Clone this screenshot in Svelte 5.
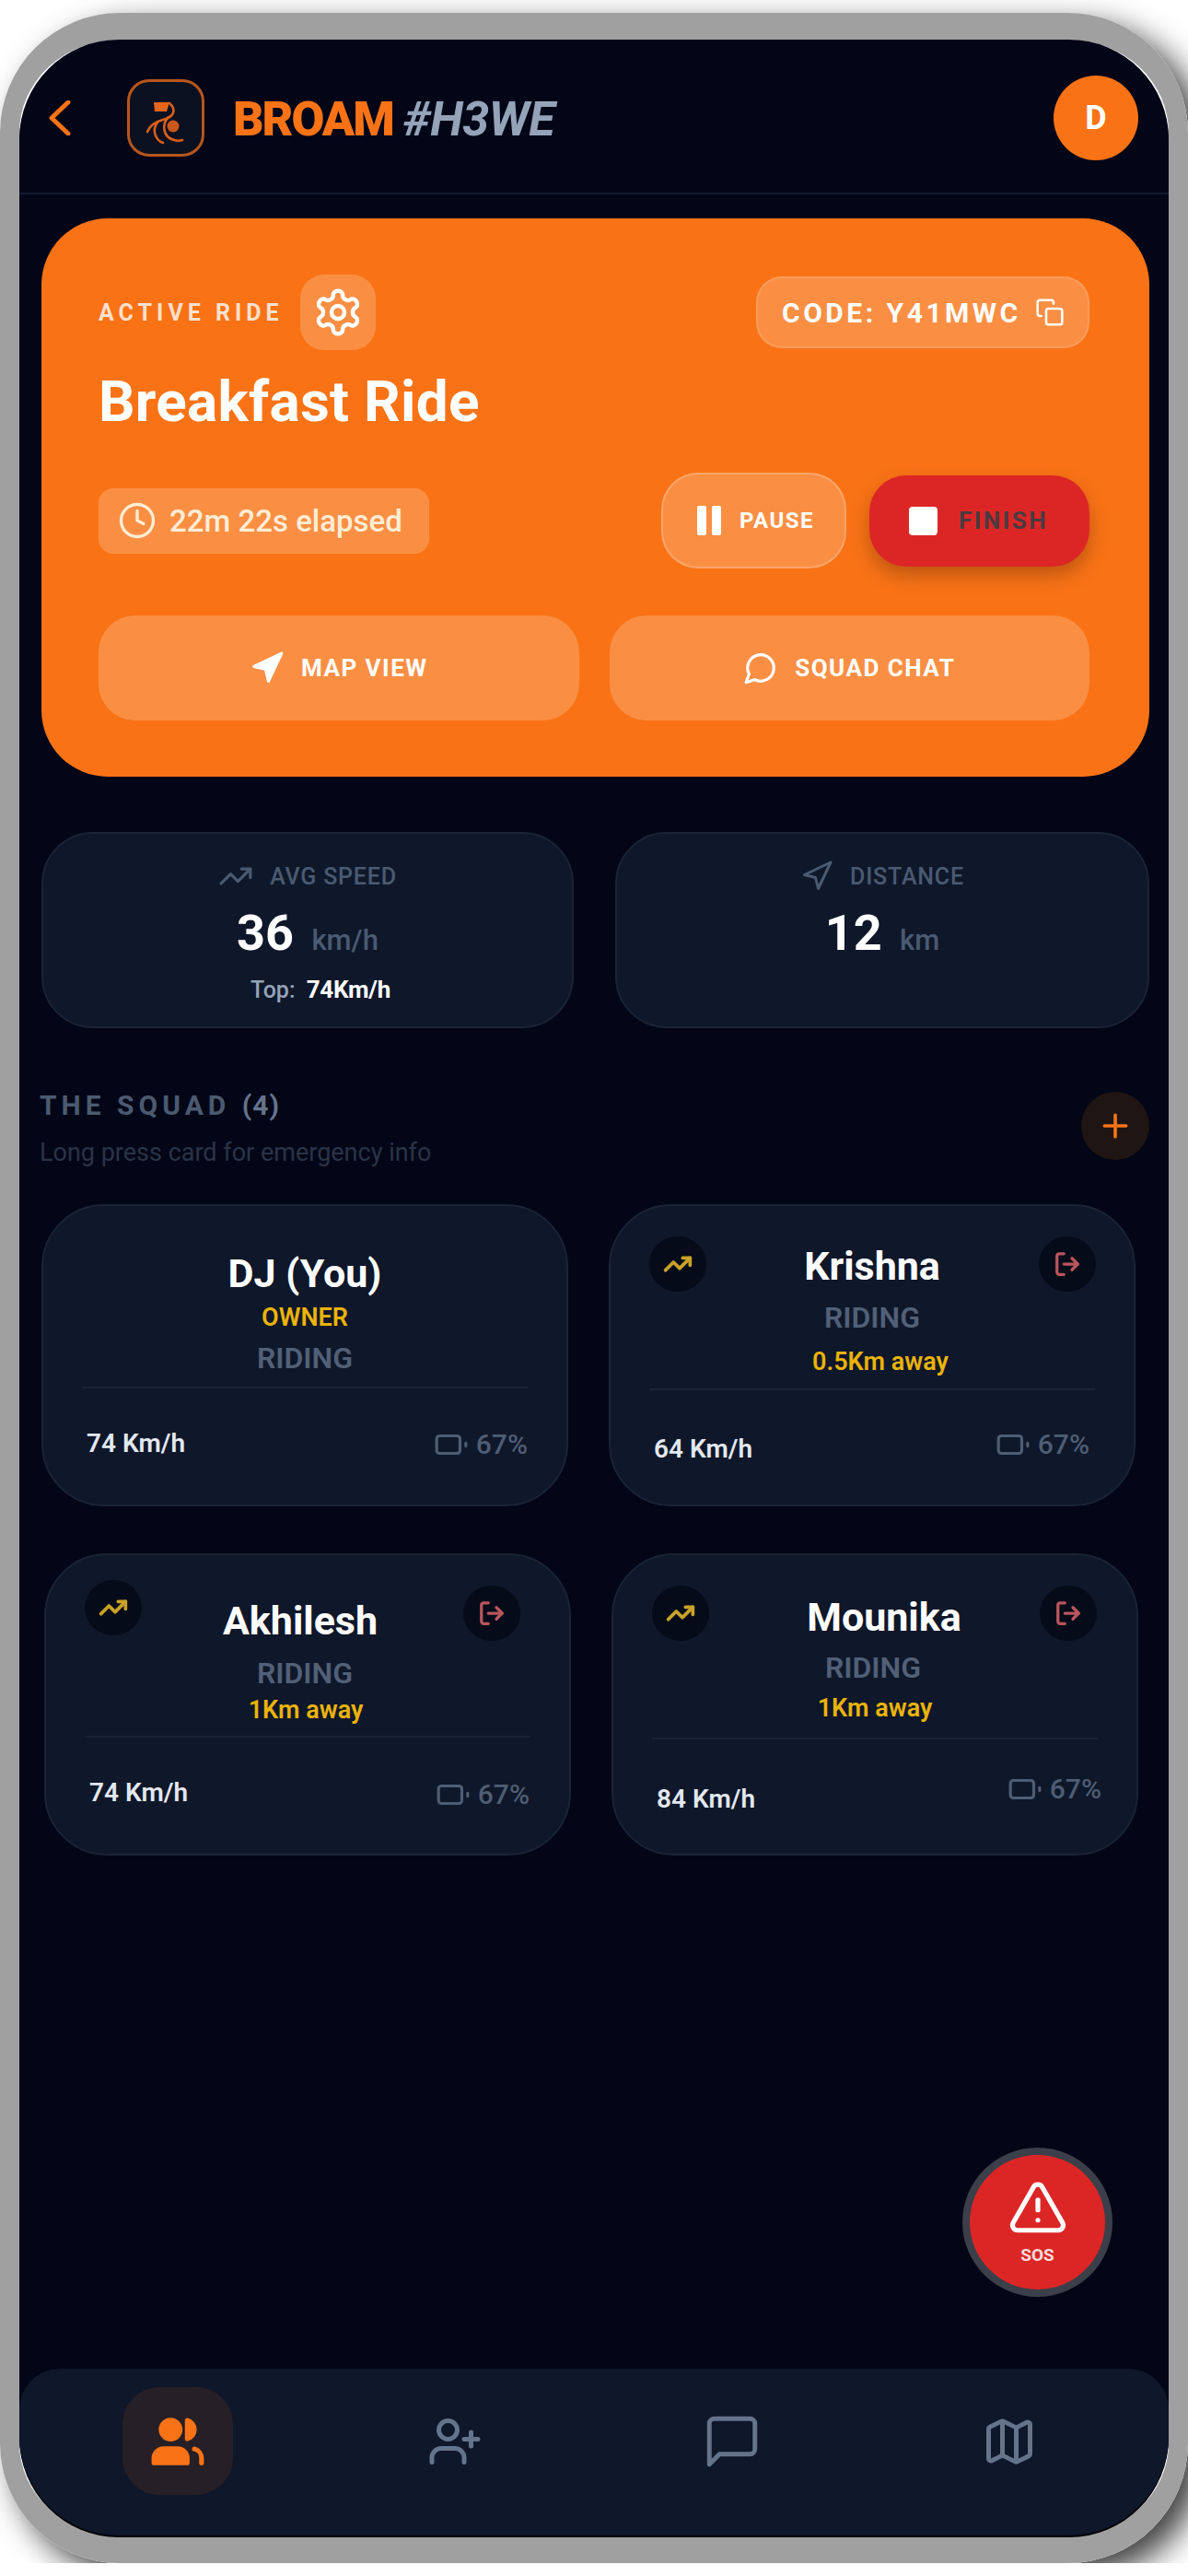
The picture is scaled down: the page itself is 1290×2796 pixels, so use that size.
<script>
  // gaps are the hand-measured spacing of each squad card, top to bottom
  const members = [
    [
      { name: 'DJ (You)', role: 'OWNER', status: 'RIDING', speed: '74 Km/h', self: true, gaps: [49, 9, 14, 16], speedTop: 45, battTop: 42, battShift: 0 },
      { name: 'Krishna', status: 'RIDING', away: '0.5Km away', awayShift: 18, speed: '64 Km/h', gaps: [41, 17, 18, 14], speedTop: 49, battTop: 40, battShift: -6, trendTop: 33, exitTop: 33, exitRight: 41 }
    ],
    [
      { name: 'Akhilesh', nameShift: -16, status: 'RIDING', statusShift: -6, away: '1Km away', awayShift: -4, speed: '74 Km/h', gaps: [47, 18, 10, 13], speedTop: 45, battTop: 43, battShift: -1, trendTop: 27, exitTop: 33, exitRight: 53 },
      { name: 'Mounika', nameShift: 20, status: 'RIDING', statusShift: -4, away: '1Km away', speed: '84 Km/h', gaps: [43, 16, 14, 17], speedTop: 50, battTop: 35, battShift: 4, trendTop: 33, exitTop: 33, exitRight: 43 }
    ]
  ];
</script>

{#snippet icon(name, size, sw = 2)}
  <svg class="ico" width={size} height={size} viewBox="0 0 24 24" fill="none" stroke="currentColor" stroke-width={sw} stroke-linecap="round" stroke-linejoin="round">
    {#if name === 'settings'}
      <path d="M12.22 2h-.44a2 2 0 0 0-2 2v.18a2 2 0 0 1-1 1.73l-.43.25a2 2 0 0 1-2 0l-.15-.08a2 2 0 0 0-2.73.73l-.22.38a2 2 0 0 0 .73 2.73l.15.1a2 2 0 0 1 1 1.72v.51a2 2 0 0 1-1 1.74l-.15.09a2 2 0 0 0-.73 2.73l.22.38a2 2 0 0 0 2.73.73l.15-.08a2 2 0 0 1 2 0l.43.25a2 2 0 0 1 1 1.73V20a2 2 0 0 0 2 2h.44a2 2 0 0 0 2-2v-.18a2 2 0 0 1 1-1.73l.43-.25a2 2 0 0 1 2 0l.15.08a2 2 0 0 0 2.73-.73l.22-.39a2 2 0 0 0-.73-2.73l-.15-.08a2 2 0 0 1-1-1.74v-.5a2 2 0 0 1 1-1.74l.15-.09a2 2 0 0 0 .73-2.73l-.22-.38a2 2 0 0 0-2.73-.73l-.15.08a2 2 0 0 1-2 0l-.43-.25a2 2 0 0 1-1-1.73V4a2 2 0 0 0-2-2z" />
      <circle cx="12" cy="12" r="3" />
    {:else if name === 'copy'}
      <rect x="9" y="9" width="13" height="13" rx="2" />
      <path d="M5 15H4a2 2 0 0 1-2-2V4a2 2 0 0 1 2-2h9a2 2 0 0 1 2 2v1" />
    {:else if name === 'clock'}
      <circle cx="12" cy="12" r="10" />
      <polyline points="12 6 12 12 16 14" />
    {:else if name === 'nav'}
      <polygon points="3 11 22 2 13 21 11 13 3 11" />
    {:else if name === 'navfill'}
      <polygon points="3 11 22 2 13 21 11 13 3 11" fill="currentColor" />
    {:else if name === 'chat'}
      <path d="M7.9 20A9 9 0 1 0 4 16.1L2 22Z" />
    {:else if name === 'trend'}
      <polyline points="22 7 13.5 15.5 8.5 10.5 2 17" />
      <polyline points="16 7 22 7 22 13" />
    {:else if name === 'exit'}
      <path d="M9 21H5a2 2 0 0 1-2-2V5a2 2 0 0 1 2-2h4" />
      <polyline points="16 17 21 12 16 7" />
      <line x1="21" y1="12" x2="9" y2="12" />
    {:else if name === 'battery'}
      <rect x="2" y="6" width="16" height="12" rx="2" />
      <line x1="22" y1="11" x2="22" y2="13" />
    {:else if name === 'plus'}
      <path d="M5 12h14" />
      <path d="M12 5v14" />
    {:else if name === 'alert'}
      <path d="m21.73 18-8-14a2 2 0 0 0-3.48 0l-8 14A2 2 0 0 0 4 21h16a2 2 0 0 0 1.73-3" />
      <path d="M12 9v4" />
      <path d="M12 17h.01" />
    {:else if name === 'users'}
      <path d="M16 21v-2a4 4 0 0 0-4-4H6a4 4 0 0 0-4 4v2z" fill="currentColor" />
      <circle cx="9" cy="7" r="4" fill="currentColor" />
      <path d="M22 21v-2a4 4 0 0 0-3-3.87" />
      <path d="M16 3.13a4 4 0 0 1 0 7.75z" fill="currentColor" />
    {:else if name === 'userplus'}
      <path d="M16 21v-2a4 4 0 0 0-4-4H6a4 4 0 0 0-4 4v2" />
      <circle cx="9" cy="7" r="4" />
      <line x1="19" y1="8" x2="19" y2="14" />
      <line x1="22" y1="11" x2="16" y2="11" />
    {:else if name === 'message'}
      <path d="M21 15a2 2 0 0 1-2 2H7l-4 4V5a2 2 0 0 1 2-2h14a2 2 0 0 1 2 2z" />
    {:else if name === 'map'}
      <path d="M14.106 5.553a2 2 0 0 0 1.788 0l3.659-1.83A1 1 0 0 1 21 4.619v12.764a1 1 0 0 1-.553.894l-4.553 2.277a2 2 0 0 1-1.788 0l-4.212-2.106a2 2 0 0 0-1.788 0l-3.659 1.83A1 1 0 0 1 3 19.381V6.618a1 1 0 0 1 .553-.894l4.553-2.277a2 2 0 0 1 1.788 0z" />
      <path d="M15 5.764v15" />
      <path d="M9 3.236v15" />
    {/if}
  </svg>
{/snippet}

{#snippet memberCard(m)}
  <article class="member">
    {#if !m.self}
      <span class="round trend" style:top="{m.trendTop}px">{@render icon('trend', 32, 2.8)}</span>
      <span class="round exit" style:top="{m.exitTop}px" style:right="{m.exitRight}px">{@render icon('exit', 30, 2.6)}</span>
    {/if}
    <div class="m-name" style:margin-top="{m.gaps[0]}px" style:margin-left="{m.nameShift ?? 0}px">{m.name}</div>
    {#if m.role}
      <div class="m-role" style:margin-top="{m.gaps[1]}px">{m.role}</div>
      <div class="m-status" style:margin-top="{m.gaps[2]}px">{m.status}</div>
    {:else}
      <div class="m-status" style:margin-top="{m.gaps[1]}px" style:margin-left="{m.statusShift ?? 0}px">{m.status}</div>
      <div class="m-away" style:margin-top="{m.gaps[2]}px" style:margin-left="{m.awayShift ?? 0}px">{m.away}</div>
    {/if}
    <div class="m-rule" style:margin-top="{m.gaps[3]}px"></div>
    <div class="m-foot">
      <span class="m-speed" style:margin-top="{m.speedTop}px">{m.speed}</span>
      <span class="m-batt" style:margin-top="{m.battTop}px" style:margin-right="{m.battShift * -1}px">
        {@render icon('battery', 38, 2)}
        67%
      </span>
    </div>
  </article>
{/snippet}

<div class="frame">
  <div class="screen">
    <header class="top">
      <svg class="back" width="24" height="38" viewBox="0 0 24 38" fill="none" stroke="#f97316" stroke-width="5" stroke-linecap="round" stroke-linejoin="round">
        <path d="M21 2 3 19l18 17" />
      </svg>
      <div class="logo">
        <svg width="78" height="78" viewBox="3 3 78 78" fill="none" stroke="#d9601a" stroke-width="2.6" stroke-linecap="round">
          <path d="M29 25h17l-3 10H30z" fill="#e5661a" stroke="none" />
          <path d="M46 26c8 7 5 15-7 18-8 2-14 6-17 13" />
          <path d="M33 47c-6 7-3 19 6 22" />
          <path d="M45 41c-8 8-6 22 6 25 3 1 6 1 9 0" />
          <circle cx="50" cy="51" r="6.5" fill="#c9581a" stroke="none" />
        </svg>
      </div>
      <h1 class="brand"><span>BROAM</span> <em>#H3WE</em></h1>
      <div class="avatar">D</div>
    </header>

    <main class="body">
      <section class="hero">
        <div class="hero-top">
          <div class="hero-label">
            <span class="eyebrow">ACTIVE RIDE</span>
            <span class="gear">{@render icon('settings', 56, 1.9)}</span>
          </div>
          <div class="code">CODE: Y41MWC {@render icon('copy', 32, 1.9)}</div>
        </div>
        <h2 class="ride">Breakfast Ride</h2>
        <div class="hero-mid">
          <div class="elapsed">{@render icon('clock', 42, 1.9)} 22m 22s elapsed</div>
          <div class="controls">
            <button class="pause">
              <span class="bars"><i></i><i></i></span>
              PAUSE
            </button>
            <button class="finish">
              <i class="stop"></i>
              FINISH
            </button>
          </div>
        </div>
        <div class="hero-links">
          <button class="link">{@render icon('navfill', 38, 2)} MAP VIEW</button>
          <button class="link">{@render icon('chat', 38, 2)} SQUAD CHAT</button>
        </div>
      </section>

      <section class="stats">
        <div class="stat">
          <div class="stat-label">{@render icon('trend', 38, 2)} AVG SPEED</div>
          <div class="stat-value">36 <small>km/h</small></div>
          <div class="stat-top">Top: <b>74Km/h</b></div>
        </div>
        <div class="stat">
          <div class="stat-label">{@render icon('nav', 36, 2)} DISTANCE</div>
          <div class="stat-value">12 <small>km</small></div>
        </div>
      </section>

      <section class="squad-head">
        <div>
          <div class="squad-title">THE SQUAD <span>(4)</span></div>
          <div class="squad-sub">Long press card for emergency info</div>
        </div>
        <button class="add">{@render icon('plus', 40, 2.2)}</button>
      </section>

      <section class="squad">
        {#each members as row, i}
          <div class="squad-row" class:second={i === 1}>
            {#each row as m}
              {@render memberCard(m)}
            {/each}
          </div>
        {/each}
      </section>
    </main>

    <button class="sos">
      {@render icon('alert', 66, 1.9)}
      <span>SOS</span>
    </button>

    <nav class="tabs">
      <span class="tab active">{@render icon('users', 62, 2)}</span>
      <span class="tab">{@render icon('userplus', 60, 2)}</span>
      <span class="tab">{@render icon('message', 66, 1.8)}</span>
      <span class="tab">{@render icon('map', 60, 2)}</span>
    </nav>
  </div>
</div>

<style>
  :global(body) {
    background: #fff;
    overflow: hidden;
    font-family: Roboto, "Liberation Sans", sans-serif;
  }

  .frame {
    box-sizing: border-box;
    width: 1290px;
    height: 2768px;
    margin-top: 14px;
    border-style: solid;
    border-color: #a0a0a0;
    border-width: 29px 21px 30px;
    border-radius: 130px;
    box-shadow: 16px 14px 34px rgba(0, 0, 0, 0.75);
  }

  .screen {
    position: relative;
    display: flex;
    flex-direction: column;
    height: 100%;
    overflow: hidden;
    border-radius: 108px;
    background: #020617;
    box-shadow: 0 2px 0 #000;
  }

  .ico {
    display: block;
    flex: none;
  }

  button {
    border: 0;
    font-family: inherit;
    padding: 0;
  }

  .top {
    box-sizing: border-box;
    display: flex;
    align-items: center;
    flex: none;
    height: 168px;
    padding: 3px 33px 0 32px;
    border-bottom: 2px solid #141c2e;
  }

  .logo {
    box-sizing: border-box;
    display: flex;
    align-items: center;
    justify-content: center;
    width: 84px;
    height: 84px;
    margin-left: 61px;
    border: 3px solid #b8561c;
    border-radius: 24px;
    background: #0b1120;
  }

  .brand {
    margin: 4px 0 0 31px;
    font-size: 52px;
    font-weight: 900;
    letter-spacing: -2px;
    line-height: 60px;
    white-space: nowrap;
  }

  .brand span {
    color: #f97316;
  }

  .brand em {
    color: #94a3b8;
    font-weight: 700;
    letter-spacing: -0.5px;
  }

  .avatar {
    display: flex;
    align-items: center;
    justify-content: center;
    width: 92px;
    height: 92px;
    margin-left: auto;
    border-radius: 50%;
    background: #f97316;
    color: #fff;
    font-size: 36px;
    font-weight: 700;
  }

  .body {
    padding: 26px 21px 0 24px;
  }

  .hero {
    box-sizing: border-box;
    height: 606px;
    padding: 61px 65px 0 62px;
    border-radius: 72px;
    background: #f97316;
    color: #fff;
  }

  .hero-top,
  .hero-mid {
    display: flex;
    align-items: center;
    justify-content: space-between;
  }

  .hero-label {
    display: flex;
    align-items: center;
    gap: 18px;
  }

  .eyebrow {
    color: rgba(255, 255, 255, 0.78);
    font-size: 25px;
    font-weight: 700;
    letter-spacing: 5px;
  }

  .gear {
    display: flex;
    align-items: center;
    justify-content: center;
    width: 82px;
    height: 82px;
    border-radius: 26px;
    background: rgba(255, 255, 255, 0.2);
  }

  .code {
    box-sizing: border-box;
    display: flex;
    align-items: center;
    gap: 15px;
    width: 362px;
    height: 78px;
    padding-left: 26px;
    border: 2px solid rgba(255, 255, 255, 0.12);
    border-radius: 28px;
    background: rgba(255, 255, 255, 0.2);
    font-size: 30px;
    font-weight: 700;
    letter-spacing: 3.5px;
    white-space: nowrap;
  }

  .ride {
    margin: 20px 0 0;
    font-size: 62px;
    font-weight: 700;
    letter-spacing: 0.3px;
    line-height: 72px;
  }

  .hero-mid {
    margin-top: 41px;
  }

  .elapsed {
    box-sizing: border-box;
    display: flex;
    align-items: center;
    gap: 14px;
    width: 359px;
    height: 71px;
    padding-left: 21px;
    border-radius: 16px;
    background: rgba(255, 255, 255, 0.2);
    color: #ffedd5;
    font-size: 33px;
    font-weight: 500;
    white-space: nowrap;
  }

  .controls {
    display: flex;
    align-items: center;
    gap: 25px;
  }

  .pause,
  .finish {
    display: flex;
    align-items: center;
    font-weight: 700;
  }

  .pause {
    box-sizing: border-box;
    gap: 20px;
    width: 201px;
    height: 104px;
    padding-left: 37px;
    border: 2px solid rgba(255, 255, 255, 0.2);
    border-radius: 40px;
    background: rgba(255, 255, 255, 0.2);
    color: #fff;
    font-size: 24px;
    letter-spacing: 1.5px;
  }

  .bars {
    display: flex;
    gap: 6px;
  }

  .bars i {
    width: 10px;
    height: 32px;
    border-radius: 2px;
    background: #fff;
  }

  .finish {
    gap: 23px;
    width: 239px;
    height: 99px;
    padding-left: 43px;
    border-radius: 40px;
    background: #dc2626;
    box-shadow: 0 10px 20px rgba(120, 50, 10, 0.45);
    color: #4a3a40;
    font-size: 26px;
    letter-spacing: 2.5px;
  }

  .stop {
    width: 31px;
    height: 31px;
    border-radius: 4px;
    background: #fff;
  }

  .hero-links {
    display: grid;
    grid-template-columns: 1fr 1fr;
    gap: 33px;
    margin-top: 51px;
  }

  .link {
    display: flex;
    align-items: center;
    justify-content: center;
    gap: 18px;
    height: 114px;
    border-radius: 40px;
    background: rgba(255, 255, 255, 0.2);
    color: #fff;
    font-size: 26px;
    font-weight: 700;
    letter-spacing: 1.5px;
  }

  .stats {
    display: grid;
    grid-template-columns: 578px 580px;
    gap: 45px;
    margin-top: 60px;
  }

  .stat {
    box-sizing: border-box;
    height: 213px;
    padding-top: 31px;
    border: 2px solid #1a2436;
    border-radius: 56px;
    background: #0f172a;
    text-align: center;
  }

  .stat-label {
    display: flex;
    align-items: center;
    justify-content: center;
    gap: 18px;
    height: 30px;
    color: #4b5a70;
    font-size: 25px;
    font-weight: 500;
    letter-spacing: 0.8px;
  }

  .stat-value {
    margin-top: 15px;
    color: #fff;
    font-size: 54px;
    font-weight: 700;
    line-height: 64px;
  }

  .stat-value small {
    margin-left: 6px;
    color: #4b5a70;
    font-size: 31px;
    font-weight: 500;
  }

  .stat-top {
    margin: 6px 0 0 28px;
    color: #94a3b8;
    font-size: 25px;
    font-weight: 500;
    line-height: 30px;
  }

  .stat-top b {
    margin-left: 6px;
    color: #fff;
    font-size: 26px;
    font-weight: 700;
    letter-spacing: -0.3px;
  }

  .squad-head {
    display: flex;
    align-items: flex-start;
    justify-content: space-between;
    height: 85px;
    margin: 66px 0 0 -2px;
  }

  .squad-title {
    color: #4b5a70;
    font-size: 30px;
    font-weight: 700;
    letter-spacing: 5px;
    line-height: 36px;
  }

  .squad-title span {
    color: #64748b;
    letter-spacing: 1px;
  }

  .squad-sub {
    margin-top: 17px;
    color: #2a3447;
    font-size: 27px;
    line-height: 32px;
  }

  .add {
    display: flex;
    align-items: center;
    justify-content: center;
    width: 74px;
    height: 74px;
    margin-top: 3px;
    border-radius: 50%;
    background: #1f1512;
    color: #f97316;
  }

  .squad {
    display: flex;
    flex-direction: column;
    gap: 51px;
    margin-top: 40px;
  }

  .squad-row {
    display: flex;
    gap: 44px;
  }

  .squad-row.second {
    margin-left: 3px;
  }

  .member {
    position: relative;
    box-sizing: border-box;
    display: flex;
    flex-direction: column;
    align-items: center;
    width: 572px;
    height: 328px;
    padding: 0 42px;
    border: 2px solid #1a2436;
    border-radius: 68px;
    background: #0f172a;
  }

  .round {
    position: absolute;
    display: flex;
    align-items: center;
    justify-content: center;
    width: 62px;
    height: 60px;
    border-radius: 50%;
    background: #060b19;
  }

  .trend {
    left: 42px;
    color: #c9a227;
  }

  .exit {
    color: #b9565c;
  }

  .m-name {
    color: #fff;
    font-size: 43px;
    font-weight: 700;
    line-height: 48px;
    white-space: nowrap;
  }

  .m-role,
  .m-status,
  .m-away {
    font-weight: 600;
    line-height: 30px;
    white-space: nowrap;
  }

  .m-role {
    color: #eab308;
    font-size: 27px;
  }

  .m-status {
    color: #526077;
    font-size: 32px;
  }

  .m-away {
    color: #eab308;
    font-size: 27px;
  }

  .m-rule {
    flex: none;
    width: 100%;
    height: 2px;
    background: #1a2436;
  }

  .m-foot {
    display: flex;
    align-items: flex-start;
    justify-content: space-between;
    width: 100%;
    box-sizing: border-box;
    padding-left: 5px;
  }

  .m-speed {
    color: #e2e8f0;
    font-size: 28px;
    font-weight: 600;
    line-height: 30px;
  }

  .m-batt {
    display: flex;
    align-items: center;
    gap: 8px;
    color: #4f5d73;
    font-size: 30px;
    font-weight: 500;
    line-height: 30px;
  }

  .sos {
    position: absolute;
    right: 61px;
    bottom: 259px;
    box-sizing: border-box;
    display: flex;
    flex-direction: column;
    align-items: center;
    justify-content: center;
    gap: 9px;
    width: 163px;
    height: 162px;
    padding-bottom: 4px;
    border: 8px solid #3b3f4a;
    border-radius: 50%;
    background: #dc2626;
    color: #fff;
  }

  .sos span {
    color: #f3dede;
    font-size: 19px;
    font-weight: 700;
    line-height: 20px;
  }

  .tabs {
    box-sizing: border-box;
    display: flex;
    flex: none;
    align-items: flex-start;
    gap: 181px;
    height: 181px;
    margin-top: auto;
    padding: 20px 0 0 112px;
    border-radius: 44px 44px 0 0;
    background: #0f172a;
    color: #64748b;
  }

  .tab {
    display: flex;
    align-items: center;
    justify-content: center;
    width: 120px;
    height: 117px;
    border-radius: 40px;
  }

  .tab.active {
    background: #261f25;
    color: #f97316;
  }
</style>
